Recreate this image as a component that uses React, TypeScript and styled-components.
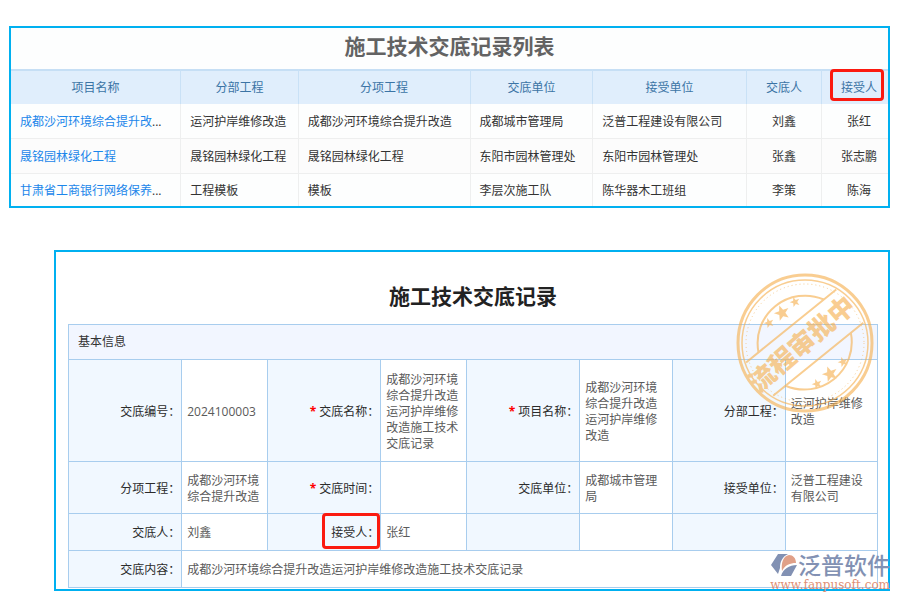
import React from "react";
import styled, { createGlobalStyle } from "styled-components";

const GlobalStyle = createGlobalStyle`
  * { box-sizing: border-box; }
  body {
    margin: 0;
    background: #fff;
    color: #333;
    font-family: "Open Sans", "Noto Sans CJK SC", sans-serif;
    font-size: 12px;
    line-height: 16px;
  }
`;

const Page = styled.main`
  display: flex;
  flex-direction: column;
  gap: 42px;
  padding: 26px 10px 8px 9px;
`;

const Panel = styled.section`
  position: relative;
  border: 2px solid #00b0f0;
  background: #fdfefe;
`;

const RecordPanel = styled(Panel)`
  margin-left: 45px;
  padding: 28px 10px 1px 12px;
  background: #fff;
`;

const ListTitle = styled.h1`
  margin: 0;
  padding: 3px 0 8px;
  font-size: 21px;
  line-height: 30px;
  text-align: center;
  color: #636363;
`;

const RecordTitle = styled.h2`
  margin: 0 0 12px;
  font-size: 21px;
  line-height: 32px;
  text-align: center;
  color: #222;
`;

const ListTable = styled.table`
  width: 100%;
  table-layout: fixed;
  border-collapse: separate;
  border-spacing: 0;
`;

const Col = styled.col<{ $share: number }>`
  width: ${(p) => p.$share}%;
`;

const HeadCell = styled.th`
  position: relative;
  height: 35px;
  padding: 0;
  border-top: 2px solid #c6dff5;
  border-right: 1px solid #c9e1f6;
  background: #e0eefc;
  color: #3b74a5;
  font-weight: 400;
  &:last-child { border-right: 0; }
`;

const ListRow = styled.tr`
  &:nth-child(even) { background: #fcfcfc; }
`;

const ListCell = styled.td<{ $center?: boolean }>`
  height: 35px;
  padding: 2px ${(p) => (p.$center ? 0 : 9)}px 0;
  border-right: 1px solid #eeefef;
  border-bottom: 1px solid #eeefef;
  text-align: ${(p) => (p.$center ? "center" : "left")};
  white-space: nowrap;
  &:last-child { border-right: 0; }
  ${ListRow}:last-child & {
    height: 32px;
    border-bottom: 0;
  }
`;

const ProjectLink = styled.a`
  color: #1b86ea;
  text-decoration: none;
`;

const Highlight = styled.span<{ $wide?: boolean }>`
  position: absolute;
  top: ${(p) => (p.$wide ? -1 : -2)}px;
  bottom: ${(p) => (p.$wide ? 1 : 3)}px;
  right: ${(p) => (p.$wide ? 0 : 4)}px;
  width: ${(p) => (p.$wide ? 58 : 54)}px;
  border: 3px solid #fb1a10;
  border-radius: 4px;
`;

const ShiftedHead = styled.span`
  padding-left: 8px;
`;

const FormTable = styled.table`
  width: 100%;
  table-layout: fixed;
  border-collapse: collapse;
`;

const SectionHead = styled.th`
  height: 35px;
  padding: 0 9px;
  border: 1px solid #a8cdee;
  background: #f2f6ff;
  text-align: left;
  font-weight: 400;
`;

const FormRow = styled.tr<{ $height: number }>`
  height: ${(p) => p.$height}px;
`;

const LabelCell = styled.th`
  position: relative;
  padding: 2px 1px 0 0;
  border: 1px solid #a8cdee;
  background: #f1f8ff;
  color: #2b2b2b;
  font-weight: 400;
  text-align: right;
`;

const ValueCell = styled.td`
  padding: 2px 5px 0;
  border: 1px solid #a8cdee;
  color: #5a5a5a;
`;

const Required = styled.span`
  margin-right: 3px;
  color: #f00;
  font-weight: 700;
`;

const Stamp = styled.svg`
  position: absolute;
  top: 20px;
  right: 13px;
  width: 140px;
  height: 142px;
  opacity: 0.62;
  pointer-events: none;
`;

const Brand = styled.a`
  position: absolute;
  right: -2px;
  bottom: -2px;
  display: grid;
  row-gap: 2px;
  justify-items: end;
  text-decoration: none;
`;

const BrandRow = styled.span`
  display: flex;
  align-items: center;
`;

const BrandMark = styled.svg`
  width: 27px;
  height: 24px;
`;

const BrandName = styled.span`
  font-size: 23px;
  line-height: 23px;
  font-weight: 500;
  color: #8291b3;
`;

const BrandUrl = styled.span`
  font-family: "DejaVu Serif", serif;
  font-size: 12px;
  line-height: 12px;
  color: #df9076;
`;

const columns = [
  { name: "项目名称", share: 19.4 },
  { name: "分部工程", share: 13.4 },
  { name: "分项工程", share: 19.6 },
  { name: "交底单位", share: 14 },
  { name: "接受单位", share: 17.5 },
  { name: "交底人", share: 8.6 },
  { name: "接受人", share: 7.5 },
];

const records = [
  ["成都沙河环境综合提升改", "运河护岸维修改造", "成都沙河环境综合提升改造", "成都城市管理局", "泛普工程建设有限公司", "刘鑫", "张红"],
  ["晟铭园林绿化工程", "晟铭园林绿化工程", "晟铭园林绿化工程", "东阳市园林管理处", "东阳市园林管理处", "张鑫", "张志鹏"],
  ["甘肃省工商银行网络保养", "工程模板", "模板", "李层次施工队", "陈华器木工班组", "李策", "陈海"],
];

const formShares = [14, 10.6, 14, 10.6, 14, 11.5, 13.9, 11.4];

type Field = { label: string; value: string; required?: boolean; marked?: boolean };

const formRows: { height: number; fields: Field[] }[] = [
  {
    height: 102,
    fields: [
      { label: "交底编号：", value: "2024100003" },
      { label: "交底名称：", value: "成都沙河环境综合提升改造运河护岸维修改造施工技术交底记录", required: true },
      { label: "项目名称：", value: "成都沙河环境综合提升改造运河护岸维修改造", required: true },
      { label: "分部工程：", value: "运河护岸维修改造" },
    ],
  },
  {
    height: 52,
    fields: [
      { label: "分项工程：", value: "成都沙河环境综合提升改造" },
      { label: "交底时间：", value: "", required: true },
      { label: "交底单位：", value: "成都城市管理局" },
      { label: "接受单位：", value: "泛普工程建设有限公司" },
    ],
  },
  {
    height: 37,
    fields: [
      { label: "交底人：", value: "刘鑫" },
      { label: "接受人：", value: "张红", marked: true },
      { label: "", value: "" },
      { label: "", value: "" },
    ],
  },
];

const starPoints = "0,-7 1.8,-2.3 6.7,-2.2 2.8,0.9 4.1,5.7 0,3 -4.1,5.7 -2.8,0.9 -6.7,-2.2 -1.8,-2.3";

const stars = [
  [-36, -20, 0.75],
  [-23, -30, 1.15],
  [-10, -41, 0.75],
  [12, 41, 0.75],
  [25, 31, 1.15],
  [38, 19, 0.75],
];

function ApprovalStamp() {
  return (
    <Stamp viewBox="-70 -71 140 142" role="img" aria-label="流程审批中">
      <g fill="none" stroke="#f6b04e">
        <ellipse rx="67" ry="68" strokeWidth="3" />
        <circle r="63" strokeWidth="1.5" />
        <circle r="59" strokeWidth="1" strokeDasharray="1 3" />
        <g transform="rotate(-39)" strokeWidth="2">
          <path d="M-58 -22H58M-58 21H58" />
          <path d="M-42 -22A47.5 47.5 0 0 1 42 -22M-42 21A47.5 47.5 0 0 0 42 21" />
        </g>
      </g>
      <g fill="#f6b04e">
        {stars.map(([x, y, s]) => (
          <polygon key={x} points={starPoints} transform={`translate(${x} ${y}) rotate(-20) scale(${s})`} />
        ))}
        <text
          transform="rotate(-41)"
          x="-3"
          y="8"
          textAnchor="middle"
          fontFamily='"Noto Sans CJK SC", sans-serif'
          fontSize="26"
          fontWeight="900"
        >
          流程审批中
        </text>
      </g>
    </Stamp>
  );
}

export default function App() {
  return (
    <>
      <GlobalStyle />
      <Page>
        <Panel>
          <ListTitle>施工技术交底记录列表</ListTitle>
          <ListTable>
            <colgroup>
              {columns.map((c) => (
                <Col key={c.name} $share={c.share} />
              ))}
            </colgroup>
            <thead>
              <tr>
                {columns.map((c, i) => (
                  <HeadCell key={c.name} scope="col">
                    {i === 6 ? (
                      <>
                        <ShiftedHead>{c.name}</ShiftedHead>
                        <Highlight />
                      </>
                    ) : (
                      c.name
                    )}
                  </HeadCell>
                ))}
              </tr>
            </thead>
            <tbody>
              {records.map((row, r) => (
                <ListRow key={r}>
                  {row.map((text, i) => (
                    <ListCell key={i} $center={i > 4}>
                      {i === 0 ? (
                        <>
                          <ProjectLink href="#record">{text}</ProjectLink>
                          {r !== 1 && "..."}
                        </>
                      ) : i === 6 ? (
                        <ShiftedHead>{text}</ShiftedHead>
                      ) : (
                        text
                      )}
                    </ListCell>
                  ))}
                </ListRow>
              ))}
            </tbody>
          </ListTable>
        </Panel>

        <RecordPanel id="record">
          <RecordTitle>施工技术交底记录</RecordTitle>
          <FormTable>
            <colgroup>
              {formShares.map((s, i) => (
                <Col key={i} $share={s} />
              ))}
            </colgroup>
            <tbody>
              <tr>
                <SectionHead colSpan={8}>基本信息</SectionHead>
              </tr>
              {formRows.map((row, r) => (
                <FormRow key={r} $height={row.height}>
                  {row.fields.map((f, i) => (
                    <React.Fragment key={i}>
                      <LabelCell scope="row">
                        {f.required && <Required>*</Required>}
                        {f.label}
                        {f.marked && <Highlight $wide />}
                      </LabelCell>
                      <ValueCell>{f.value}</ValueCell>
                    </React.Fragment>
                  ))}
                </FormRow>
              ))}
              <FormRow $height={37}>
                <LabelCell scope="row">交底内容：</LabelCell>
                <ValueCell colSpan={7}>成都沙河环境综合提升改造运河护岸维修改造施工技术交底记录</ValueCell>
              </FormRow>
            </tbody>
          </FormTable>
          <ApprovalStamp />
          <Brand href="#record">
            <BrandRow>
              <BrandMark viewBox="0 0 27 24" aria-hidden="true">
                <path d="M7 1H17C11 4 9 9 9 15L7 21L0 12Z" fill="#8291b3" />
                <path d="M11 18C10 10 12 3 18 2C22 2 25 5 25 10C19 10 14 12 11 18Z" fill="#e0a088" />
                <path d="M10 23C12 16 18 12 26 12L20 23Z" fill="#8291b3" />
              </BrandMark>
              <BrandName>泛普软件</BrandName>
            </BrandRow>
            <BrandUrl>www.fanpusoft.com</BrandUrl>
          </Brand>
        </RecordPanel>
      </Page>
    </>
  );
}
